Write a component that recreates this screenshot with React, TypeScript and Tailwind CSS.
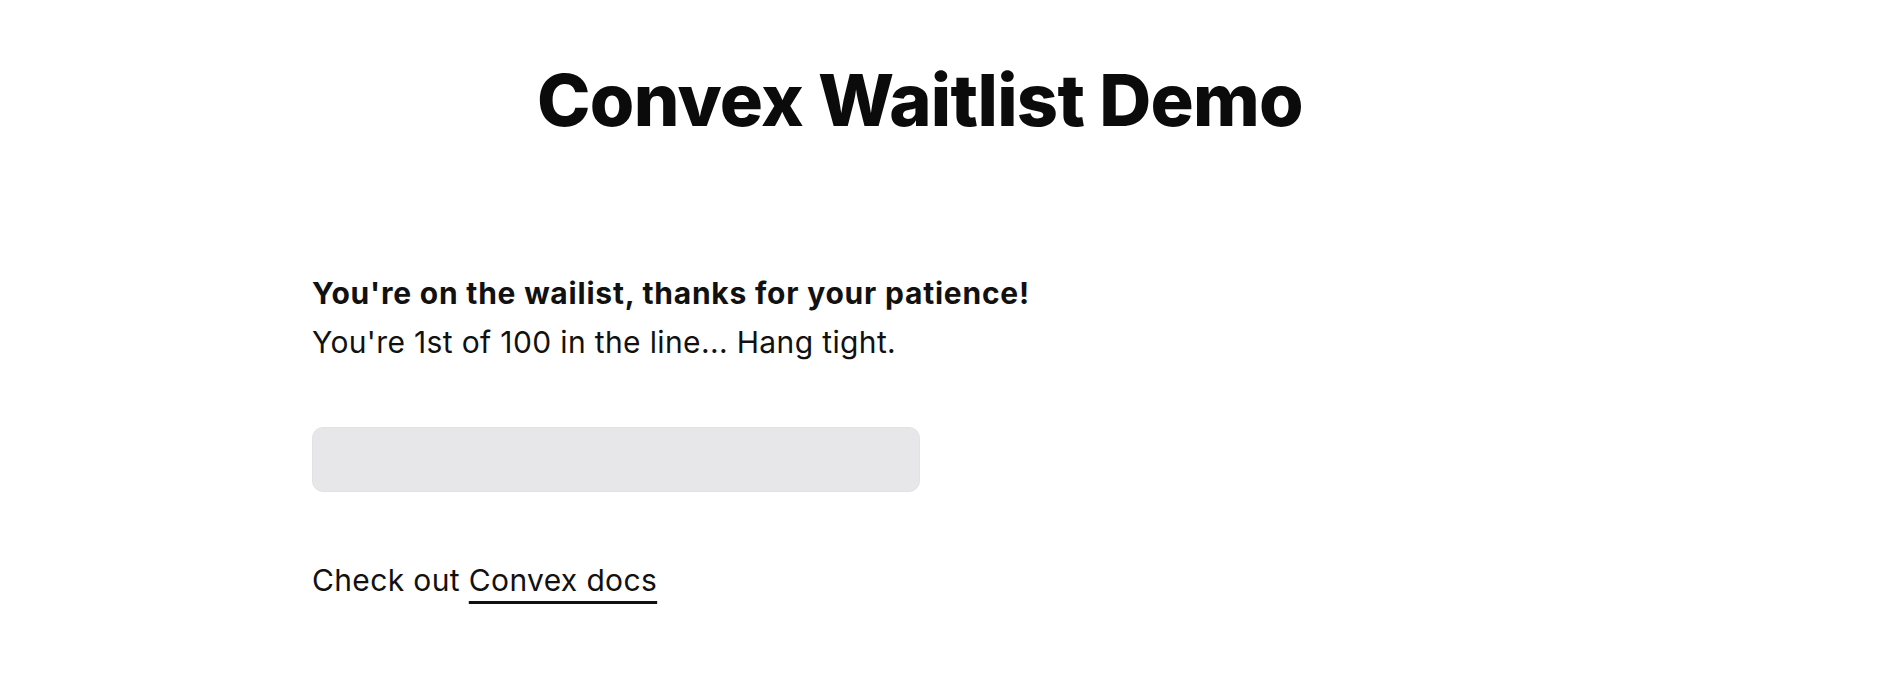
import React from "react";

export default function App() {
  return (
    <div className="min-h-[680px] bg-white text-[#111111] font-['Inter',sans-serif]">
      <div className="ml-[312px] w-[1216px]">
        <h1 className="pt-[55px] text-center text-[72px] leading-[90px] font-extrabold tracking-[-0.01em] text-[#0b0b0b]">
          Convex Waitlist Demo
        </h1>

        <div className="mt-[124px] text-[30px] leading-[49px]">
          <p className="font-bold tracking-[0.026em]">You're on the wailist, thanks for your patience!</p>
          <p className="tracking-[0.012em]">You're 1st of 100 in the line... Hang tight.</p>
        </div>

        <div className="mt-[60px] h-[65px] w-[608px] rounded-[11px] border border-[#e2e2e4] bg-[#e7e7e9]"></div>

        <p className="mt-[64px] text-[30px] leading-[49px] tracking-[0.012em]">
          Check out{" "}
          <a href="#" className="underline decoration-[3px] underline-offset-[10px]">
            Convex docs
          </a>
        </p>
      </div>
    </div>
  );
}
